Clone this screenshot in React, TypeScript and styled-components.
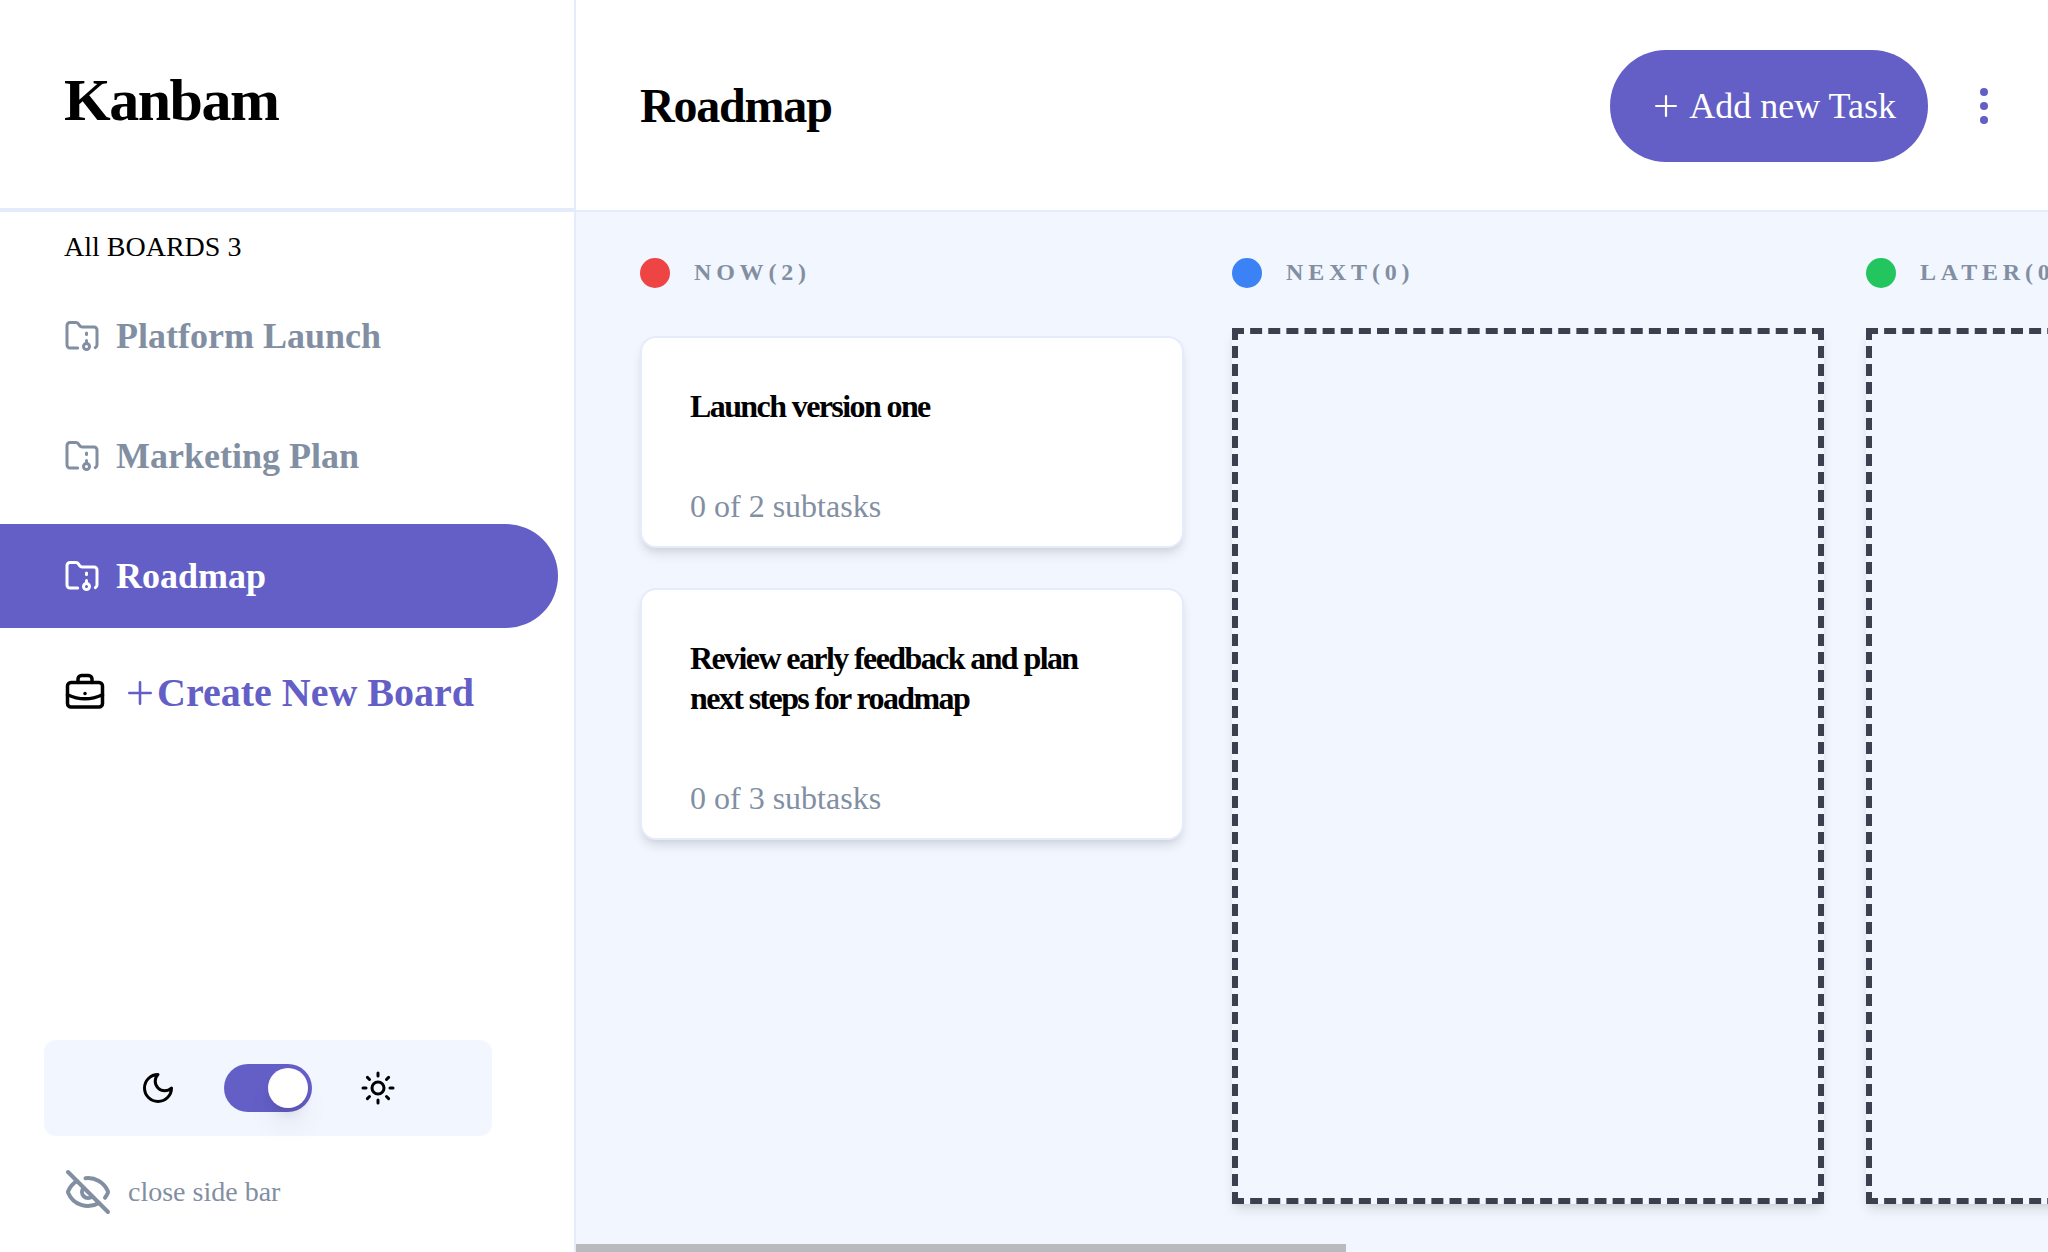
import { useState } from "react";
import styled, { createGlobalStyle } from "styled-components";
import { EyeOff, FolderArchive, Sun } from "lucide-react";

const color = {
  purple: "#645fc6",
  grey: "#828fa3",
  line: "#e4ebfa",
  canvas: "#f2f6fe",
  dash: "#3e3f4e",
  thumb: "#b8babd",
};

const GlobalStyle = createGlobalStyle`
  *, *::before, *::after { box-sizing: border-box; }
  html, body, #root { height: 100%; }
  body {
    margin: 0;
    background: #fff;
    color: #000;
    font-family: "Liberation Serif", "Times New Roman", serif;
  }
  h1, h2, h3, p, ul { margin: 0; padding: 0; }
  ul { list-style: none; }
  button { border: 0; padding: 0; background: none; font: inherit; color: inherit; cursor: pointer; text-align: left; }
  svg { display: block; flex: none; }
`;

const Page = styled.div`
  display: grid;
  grid-template-columns: 576px minmax(0, 1fr);
  height: 100%;
  overflow: hidden;
`;

const Sidebar = styled.aside`
  display: flex;
  flex-direction: column;
  border-right: 2px solid ${color.line};
`;

const Brand = styled.div`
  height: 212px;
  padding: 64px 64px 0;
  border-bottom: 4px solid ${color.line};
`;

const BrandName = styled.h1`
  font-size: 60px;
  line-height: 72px;
  letter-spacing: -0.025em;
`;

const BoardsLabel = styled.p`
  padding: 15px 64px 17px;
  font-size: 28px;
  line-height: 40px;
`;

const BoardList = styled.ul`
  display: flex;
  flex-direction: column;
  gap: 16px;
  padding-right: 16px;
`;

const BoardButton = styled.button<{ $active: boolean }>`
  display: flex;
  align-items: center;
  gap: 16px;
  width: 100%;
  height: 104px;
  padding-left: 64px;
  border-radius: 0 52px 52px 0;
  font-size: 36px;
  font-weight: 700;
  line-height: 40px;
  color: ${(p) => (p.$active ? "#fff" : color.grey)};
  background: ${(p) => (p.$active ? color.purple : "transparent")};
`;

const CreateRow = styled.div`
  display: flex;
  align-items: center;
  gap: 22px;
  padding: 40px 64px 0;
`;

const CreateButton = styled.button`
  display: flex;
  align-items: center;
  gap: 5px;
  font-size: 40px;
  font-weight: 700;
  line-height: 50px;
  color: ${color.purple};
`;

const SidebarFoot = styled.div`
  display: flex;
  flex-direction: column;
  gap: 32px;
  margin-top: auto;
  padding: 0 82px 36px 44px;
`;

const ThemePanel = styled.div`
  display: flex;
  align-items: center;
  justify-content: center;
  gap: 48px;
  height: 96px;
  border-radius: 12px;
  background: ${color.canvas};
`;

const Switch = styled.button<{ $on: boolean }>`
  display: flex;
  align-items: center;
  justify-content: ${(p) => (p.$on ? "flex-end" : "flex-start")};
  width: 88px;
  height: 48px;
  padding: 4px;
  border-radius: 24px;
  background: ${color.purple};
`;

const Knob = styled.span`
  width: 40px;
  height: 40px;
  border-radius: 50%;
  background: #fff;
  box-shadow: 0 20px 30px -6px rgba(0, 0, 0, 0.1), 0 8px 12px -4px rgba(0, 0, 0, 0.1);
`;

const HideButton = styled.button`
  display: flex;
  align-items: center;
  gap: 16px;
  margin-left: 20px;
  font-size: 28px;
  line-height: 40px;
  color: ${color.grey};
`;

const Main = styled.main`
  display: flex;
  flex-direction: column;
  min-width: 0;
  background: ${color.canvas};
`;

const TopBar = styled.header`
  display: flex;
  align-items: center;
  gap: 28px;
  flex: none;
  height: 212px;
  padding: 2px 36px 0 64px;
  border-bottom: 2px solid ${color.line};
  background: #fff;
`;

const BoardTitle = styled.h2`
  flex: 1;
  font-size: 48px;
  line-height: 64px;
  letter-spacing: -0.025em;
`;

const AddTask = styled.button`
  display: flex;
  align-items: center;
  gap: 12px;
  height: 112px;
  padding: 0 32px 0 45px;
  border-radius: 56px;
  font-size: 36px;
  line-height: 40px;
  color: #fff;
  background: ${color.purple};
`;

const MenuButton = styled.button`
  display: grid;
  place-items: center;
  width: 56px;
  height: 56px;
  color: ${color.purple};
`;

const Board = styled.div`
  display: flex;
  flex: 1;
  gap: 42px;
  min-height: 0;
  padding: 40px 64px;
  overflow: hidden;
`;

const Column = styled.section<{ $width: number }>`
  display: flex;
  flex-direction: column;
  flex: none;
  width: ${(p) => p.$width}px;
`;

const ColumnHead = styled.div`
  display: flex;
  align-items: flex-start;
  gap: 24px;
  padding-top: 6px;
`;

const Dot = styled.span<{ $color: string }>`
  width: 30px;
  height: 30px;
  border-radius: 50%;
  background: ${(p) => p.$color};
`;

const ColumnName = styled.h3`
  font-size: 24px;
  line-height: 28px;
  letter-spacing: 0.2em;
  white-space: nowrap;
  color: ${color.grey};
`;

const CardList = styled.ul`
  display: flex;
  flex-direction: column;
  gap: 40px;
  padding: 48px 6px 0 0;
`;

const Card = styled.li`
  display: flex;
  flex-direction: column;
  gap: 60px;
  padding: 48px 48px 20px;
  border: 2px solid ${color.line};
  border-radius: 16px;
  background: #fff;
  box-shadow: 0 8px 12px -2px rgba(0, 0, 0, 0.1), 0 4px 8px -4px rgba(0, 0, 0, 0.1);
`;

const CardTitle = styled.p`
  font-size: 32px;
  font-weight: 700;
  line-height: 40px;
  letter-spacing: -0.05em;
`;

const CardMeta = styled.p`
  font-size: 32px;
  line-height: 40px;
  color: ${color.grey};
`;

const DropZone = styled.div`
  flex: 1;
  margin-top: 40px;
  border: 6px dashed ${color.dash};
  box-shadow: 0 8px 12px -2px rgba(0, 0, 0, 0.1), 0 4px 8px -4px rgba(0, 0, 0, 0.1);
`;

const ScrollTrack = styled.div`
  flex: none;
  height: 8px;
`;

const ScrollThumb = styled.div`
  width: 52.3%;
  height: 100%;
  background: ${color.thumb};
`;

function PlusIcon({ size, stroke }: { size: number; stroke: number }) {
  const mid = size / 2;
  return (
    <svg width={size} height={size} fill="none" stroke="currentColor" strokeWidth={stroke} strokeLinecap="round" aria-hidden="true">
      <path d={`M${mid} ${stroke / 2}V${size - stroke / 2}M${stroke / 2} ${mid}H${size - stroke / 2}`} />
    </svg>
  );
}

function BriefcaseIcon() {
  return (
    <svg width="42" height="42" viewBox="0 0 24 24" fill="none" stroke="#000" strokeWidth="2" strokeLinecap="round" strokeLinejoin="round" aria-hidden="true">
      <rect x="2" y="6" width="20" height="14" rx="2" />
      <path d="M8 6V4a2 2 0 0 1 2-2h4a2 2 0 0 1 2 2v2" />
      <path d="M2 13a23.7 23.7 0 0 0 20 0" />
      <path d="M12 12.3h.01" />
    </svg>
  );
}

function MoonIcon() {
  return (
    <svg width="36" height="36" viewBox="0 0 24 24" fill="none" stroke="#000" strokeWidth="2" strokeLinecap="round" strokeLinejoin="round" aria-hidden="true">
      <path d="M12 3a6 6 0 0 0 9 9 9 9 0 1 1-9-9Z" />
    </svg>
  );
}

function DotsIcon() {
  return (
    <svg width="8" height="36" fill="currentColor" aria-hidden="true">
      <circle cx="4" cy="4" r="4" />
      <circle cx="4" cy="18" r="4" />
      <circle cx="4" cy="32" r="4" />
    </svg>
  );
}

type Task = { title: string; subtasks: number };
type Lane = { name: string; color: string; width: number; tasks: Task[] };

const boards = ["Platform Launch", "Marketing Plan", "Roadmap"];

const lanes: Lane[] = [
  {
    name: "NOW",
    color: "#ef4444",
    width: 550,
    tasks: [
      { title: "Launch version one", subtasks: 2 },
      { title: "Review early feedback and plan next steps for roadmap", subtasks: 3 },
    ],
  },
  { name: "NEXT", color: "#3b82f6", width: 592, tasks: [] },
  { name: "LATER", color: "#22c55e", width: 592, tasks: [] },
];

export default function App() {
  const [active, setActive] = useState("Roadmap");
  const [light, setLight] = useState(true);

  return (
    <>
      <GlobalStyle />
      <Page>
        <Sidebar>
          <Brand>
            <BrandName>Kanbam</BrandName>
          </Brand>
          <BoardsLabel>All BOARDS {boards.length}</BoardsLabel>
          <BoardList>
            {boards.map((name) => (
              <li key={name}>
                <BoardButton $active={name === active} onClick={() => setActive(name)}>
                  <FolderArchive size={36} />
                  {name}
                </BoardButton>
              </li>
            ))}
          </BoardList>
          <CreateRow>
            <BriefcaseIcon />
            <CreateButton>
              <PlusIcon size={24} stroke={2.6} />
              Create New Board
            </CreateButton>
          </CreateRow>
          <SidebarFoot>
            <ThemePanel>
              <MoonIcon />
              <Switch
                role="switch"
                aria-checked={light}
                aria-label="Light theme"
                $on={light}
                onClick={() => setLight(!light)}
              >
                <Knob />
              </Switch>
              <Sun size={36} color="#000" />
            </ThemePanel>
            <HideButton>
              <EyeOff size={48} />
              close side bar
            </HideButton>
          </SidebarFoot>
        </Sidebar>
        <Main>
          <TopBar>
            <BoardTitle>{active}</BoardTitle>
            <AddTask>
              <PlusIcon size={22} stroke={2.2} />
              Add new Task
            </AddTask>
            <MenuButton aria-label="Board menu">
              <DotsIcon />
            </MenuButton>
          </TopBar>
          <Board>
            {lanes.map((lane) => (
              <Column key={lane.name} $width={lane.width}>
                <ColumnHead>
                  <Dot $color={lane.color} />
                  <ColumnName>
                    {lane.name}({lane.tasks.length})
                  </ColumnName>
                </ColumnHead>
                {lane.tasks.length > 0 ? (
                  <CardList>
                    {lane.tasks.map((task) => (
                      <Card key={task.title}>
                        <CardTitle>{task.title}</CardTitle>
                        <CardMeta>0 of {task.subtasks} subtasks</CardMeta>
                      </Card>
                    ))}
                  </CardList>
                ) : (
                  <DropZone />
                )}
              </Column>
            ))}
          </Board>
          <ScrollTrack>
            <ScrollThumb />
          </ScrollTrack>
        </Main>
      </Page>
    </>
  );
}
